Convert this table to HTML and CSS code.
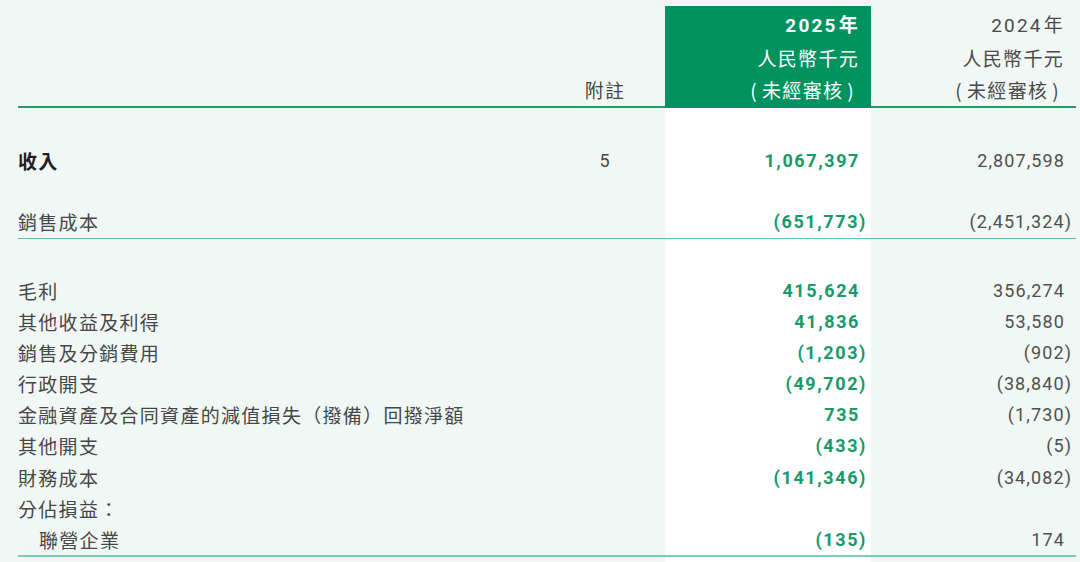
FILE: index.html
```html
<!DOCTYPE html>
<html lang="zh-Hant">
<head>
<meta charset="utf-8">
<title>綜合損益表</title>
<link rel="stylesheet" href="styles.css">
</head>
<body>
<div class="sheet">
  <div class="row head">
    <div class="lab"></div>
    <div class="note">附註</div>
    <div class="cur hcell">
      <div class="yr"><span class="d">2025</span>年</div>
      <div>人民幣千元</div>
      <div><span class="pp">(</span>未經審核<span class="pp">)</span></div>
    </div>
    <div class="prev hcell">
      <div class="yr"><span class="d">2024</span>年</div>
      <div>人民幣千元</div>
      <div><span class="pp">(</span>未經審核<span class="pp">)</span></div>
    </div>
  </div>

  <div class="row spacer"><div></div><div></div><div class="cur"></div><div></div></div>

  <div class="row line">
    <div class="lab strong">收入</div>
    <div class="note num">5</div>
    <div class="cur num">1,067,397</div>
    <div class="prev num">2,807,598</div>
  </div>
  <div class="row line"><div></div><div></div><div class="cur"></div><div></div></div>
  <div class="row line sub">
    <div class="lab">銷售成本</div>
    <div class="note"></div>
    <div class="cur num">(651,773<span class="rp">)</span></div>
    <div class="prev num">(2,451,324<span class="rp">)</span></div>
  </div>

  <div class="row spacer"><div></div><div></div><div class="cur"></div><div></div></div>

  <div class="row item">
    <div class="lab">毛利</div><div class="note"></div>
    <div class="cur num">415,624</div>
    <div class="prev num">356,274</div>
  </div>
  <div class="row item">
    <div class="lab">其他收益及利得</div><div class="note"></div>
    <div class="cur num">41,836</div>
    <div class="prev num">53,580</div>
  </div>
  <div class="row item">
    <div class="lab">銷售及分銷費用</div><div class="note"></div>
    <div class="cur num">(1,203<span class="rp">)</span></div>
    <div class="prev num">(902<span class="rp">)</span></div>
  </div>
  <div class="row item">
    <div class="lab">行政開支</div><div class="note"></div>
    <div class="cur num">(49,702<span class="rp">)</span></div>
    <div class="prev num">(38,840<span class="rp">)</span></div>
  </div>
  <div class="row item">
    <div class="lab">金融資產及合同資產的減值損失（撥備）回撥淨額</div><div class="note"></div>
    <div class="cur num">735</div>
    <div class="prev num">(1,730<span class="rp">)</span></div>
  </div>
  <div class="row item">
    <div class="lab">其他開支</div><div class="note"></div>
    <div class="cur num">(433<span class="rp">)</span></div>
    <div class="prev num">(5<span class="rp">)</span></div>
  </div>
  <div class="row item">
    <div class="lab">財務成本</div><div class="note"></div>
    <div class="cur num">(141,346<span class="rp">)</span></div>
    <div class="prev num">(34,082<span class="rp">)</span></div>
  </div>
  <div class="row item">
    <div class="lab">分佔損益：</div><div class="note"></div>
    <div class="cur"></div>
    <div class="prev"></div>
  </div>
  <div class="row item last">
    <div class="lab indent">聯營企業</div><div class="note"></div>
    <div class="cur num">(135<span class="rp">)</span></div>
    <div class="prev num">174</div>
  </div>

  <div class="row filler"><div></div><div></div><div class="cur"></div><div></div></div>
</div>
</body>
</html>
```

FILE: styles.css
```css
html, body {
  margin: 0;
  height: 562px;
  overflow: hidden;
  background: #f0f7f4;
}

.sheet {
  width: 1058px;
  padding: 6px 0 0 18px;
  font-family: "Noto Sans CJK TC", "Noto Sans CJK SC", sans-serif;
  font-size: 19px;
  letter-spacing: 1.3px;
  color: #474747;
}

.row {
  display: grid;
  grid-template-columns: 527px 120px 206px 205px;
}

.cur {
  background: #ffffff;
}

/* header */
.head {
  height: 100px;
  border-bottom: 2px solid #1f9a69;
}

.head .note {
  align-self: end;
  text-align: center;
  line-height: 32px;
  padding-bottom: 2px;
}

.hcell {
  text-align: right;
  line-height: 32px;
  padding: 2px 12px 2px 0;
}

.head .cur {
  background: #00935f;
  color: #ffffff;
}

.head .prev {
  color: #4a4a4a;
}

.yr .d {
  font-family: Roboto, sans-serif;
  letter-spacing: 2.2px;
  margin-right: 1px;
}

.head .cur .yr {
  font-weight: 700;
}

.pp {
  margin: 0 4px;
}

/* body rows */
.spacer {
  height: 36.5px;
}

.line {
  height: 31.25px;
  line-height: 31.25px;
}

.sub {
  height: 30.5px;
  line-height: 30.5px;
  border-bottom: 1.5px solid #62c09a;
}

.item {
  height: 31.1px;
  line-height: 31.1px;
}

.last {
  border-bottom: 2px solid #7ccdab;
}

.filler {
  height: 10px;
}

.lab {
  white-space: nowrap;
}

.strong {
  font-weight: 700;
  color: #1f1f1f;
}

.indent {
  padding-left: 21px;
}

.num {
  font-family: Roboto, sans-serif;
  font-size: 18px;
  letter-spacing: 1.1px;
  text-align: right;
  white-space: nowrap;
}

.note.num {
  text-align: center;
  color: #4a4a4a;
}

.cur.num {
  color: #179a68;
  font-weight: 700;
  letter-spacing: 1.6px;
  padding-right: 11px;
}

.prev.num {
  color: #505050;
  padding-right: 11px;
}

.rp {
  margin-right: -7px;
}
```
